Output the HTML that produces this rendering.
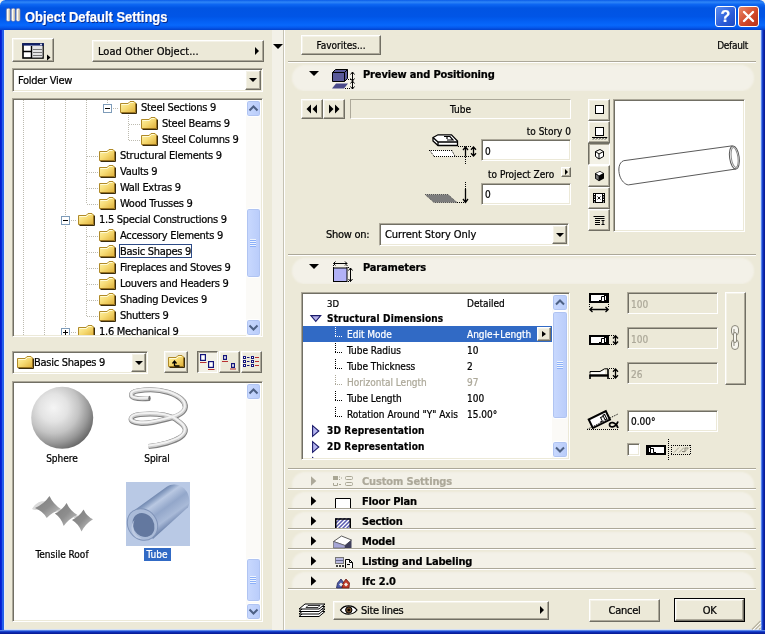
<!DOCTYPE html>
<html><head><meta charset="utf-8"><title>Object Default Settings</title>
<style>
*{box-sizing:border-box;margin:0;padding:0}
html,body{width:765px;height:634px;overflow:hidden;background:#ECE9D8}
body{position:relative;font-family:"DejaVu Sans Condensed","Liberation Sans",sans-serif;font-size:11px;letter-spacing:-0.28px;color:#000;line-height:14px}
.a{position:absolute}
.t{position:absolute;white-space:nowrap;height:14px;line-height:14px;-webkit-text-stroke:0.22px currentColor}
.b{font-weight:bold;letter-spacing:-0.15px}
.s{font-size:10px;letter-spacing:0}
.s.b{letter-spacing:0.15px}
.g{color:#ACA899}
.w{color:#fff}
.btn{position:absolute;background:#ECE9D8;border:1px solid;border-color:#fff #716F64 #716F64 #fff;box-shadow:inset -1px -1px 0 #ACA899,inset 1px 1px 0 #F4F2E8}
.btnp{position:absolute;background:#F3F1E6;border:1px solid;border-color:#716F64 #fff #fff #716F64;box-shadow:inset 1px 1px 0 #ACA899}
.sunk{position:absolute;background:#fff;border:1px solid;border-color:#ACA899 #fff #fff #ACA899;box-shadow:inset 1px 1px 0 #716F64,inset -1px -1px 0 #ECE9D8}
.thin{position:absolute;border:1px solid;border-color:#ACA899 #fff #fff #ACA899}
.hl{position:absolute;height:2px;border-top:1px solid #ACA899;border-bottom:1px solid #fff}
.pill{position:absolute;background:#F3F1E8}
.td{position:absolute;width:0;height:0;border-left:5px solid transparent;border-right:5px solid transparent;border-top:5px solid #000}
.tr{position:absolute;width:0;height:0;border-top:4px solid transparent;border-bottom:4px solid transparent;border-left:4px solid #000}
.sb{position:absolute;background:#FBFAF7}
.sbb{position:absolute;background:linear-gradient(to right,#C9D9FE,#B9CCFA);border:1px solid #fff;border-radius:3px;box-shadow:inset 0 0 0 1px #B0C4F2}
svg{position:absolute;overflow:visible}
.vd{position:absolute;width:1px;background-image:linear-gradient(to bottom,#BDBBB0 50%,transparent 50%);background-size:1px 2px}
.hd{position:absolute;height:1px;background-image:linear-gradient(to right,#BDBBB0 50%,transparent 50%);background-size:2px 1px}
</style></head><body><div id="w" style="position:absolute;left:0;top:0;width:765px;height:634px;overflow:hidden;will-change:transform;opacity:0.999">

<svg width="0" height="0" style="left:0;top:0"><defs>
<linearGradient id="fg" x1="0" y1="0" x2="1" y2="1"><stop offset="0" stop-color="#FFF6B0"/><stop offset="0.5" stop-color="#F6DA72"/><stop offset="1" stop-color="#DDAE38"/></linearGradient>

<radialGradient id="sph" cx="0.36" cy="0.34" r="0.71"><stop offset="0" stop-color="#F5F5F5"/><stop offset="0.32" stop-color="#E3E3E3"/><stop offset="0.58" stop-color="#C4C4C4"/><stop offset="0.8" stop-color="#989898"/><stop offset="1" stop-color="#666666"/></radialGradient>
</defs></svg>
<div class="a" style="left:0;top:0;width:765px;height:30px;background:linear-gradient(to bottom,#0A5BE8 0,#2F86F7 7%,#0D66F2 15%,#0054E3 27%,#0055E6 55%,#0460F4 72%,#0768FC 84%,#0558EC 92%,#0141CC 100%)"></div>
<div class="t" style="left:25px;top:8px;height:18px;color:#fff;font:bold 14px/18px 'Liberation Sans',sans-serif;letter-spacing:0;transform-origin:0 0;transform:scaleX(0.925);text-shadow:1px 1px 0 #0A2A8A">Object Default Settings</div>
<svg style="left:6px;top:8px" width="15" height="14" viewBox="0 0 15 14"><g stroke="#5A6AA8" stroke-width="0.7"><rect x="0.3" y="0.3" width="4" height="13" rx="1.6" fill="#FFFDF2"/><rect x="5.2" y="0.3" width="4" height="13" rx="1.6" fill="#FFFDF2"/><rect x="10.1" y="0.3" width="4" height="13" rx="1.6" fill="#FFFDF2"/></g><path d="M3.2 1.5 V12 M8.1 1.5 V12 M13 1.5 V12" stroke="#B9A98F" stroke-width="1"/></svg>
<div class="a" style="left:715px;top:6px;width:21px;height:21px;border:1px solid #fff;border-radius:3px;background:linear-gradient(135deg,#5B8DF0,#2A5BD8 60%,#1E49C0)"></div>
<div class="t" style="left:715px;top:7px;width:21px;height:19px;line-height:19px;text-align:center;color:#fff;font:bold 16px/19px 'Liberation Sans',sans-serif;letter-spacing:0">?</div>
<div class="a" style="left:738px;top:6px;width:21px;height:21px;border:1px solid #fff;border-radius:3px;background:linear-gradient(135deg,#E9896A,#D2492A 55%,#B8321A)"></div>
<svg style="left:738px;top:6px" width="21" height="21"><path d="M6 6 L15 15 M15 6 L6 15" stroke="#fff" stroke-width="2.4" stroke-linecap="round"/></svg>
<div class="a" style="left:4px;top:30px;width:1px;height:600px;background:#E4ECFA"></div><div class="a" style="left:760px;top:30px;width:1px;height:600px;background:#D4E0F6"></div><div class="a" style="left:4px;top:629px;width:757px;height:1px;background:#D4E0F6"></div>
<svg style="left:0;top:0" width="765" height="6"><path d="M0 0 H5.500 A5.500 5.500 0 0 0 0 5.500Z M765 0 H759.500 A5.500 5.500 0 0 1 765 5.500Z" fill="#F4F4F0"/></svg>
<div class="a" style="left:0;top:30px;width:4px;height:604px;background:linear-gradient(to right,#0019CF 0,#0A2AD8 40%,#2460EA 60%,#2460EA 100%)"></div>
<div class="a" style="left:761px;top:30px;width:4px;height:604px;background:linear-gradient(to right,#9DBCF5 0,#2A5CE0 22%,#1038C4 45%,#0A22A6 70%,#061A90 100%)"></div>
<div class="a" style="left:0;top:630px;width:765px;height:4px;background:linear-gradient(to bottom,#9DBCF5 0,#2A5CE0 22%,#1038C4 45%,#0A22A6 70%,#061A90 100%)"></div>
<div class="btn" style="left:12px;top:38px;width:42px;height:24px"></div>
<svg style="left:22px;top:43px" width="30" height="18"><rect x="1" y="1" width="20" height="14" fill="#fff" stroke="#000" stroke-width="1.6"/><rect x="10" y="3" width="10.5" height="11.5" fill="#E4E4E4"/><rect x="0.2" y="0.2" width="21.6" height="2.4" fill="#10206A"/><rect x="18" y="0.8" width="2" height="1" fill="#fff"/><path d="M9.5 3 V15 M1 8.5 H9.5" stroke="#000" stroke-width="1.4"/><path d="M11 6.5 H20 M11 9.5 H20 M11 12.5 H20" stroke="#777" stroke-width="1"/><path d="M25 11.5 L28.5 14.5 L25 17.5Z" fill="#000"/></svg>
<div class="btn" style="left:92px;top:40px;width:172px;height:22px"></div>
<div class="t " style="left:98px;top:45px;letter-spacing:0.05px">Load Other Object...</div>
<div class="tr" style="left:255px;top:47px"></div>
<div class="sunk" style="left:12px;top:68px;width:251px;height:24px;"></div>
<div class="t " style="left:18px;top:74px;">Folder View</div>
<div class="btn" style="left:245px;top:70px;width:16px;height:20px"></div>
<div class="a" style="left:249px;top:78px;width:0;height:0;border-left:4px solid transparent;border-right:4px solid transparent;border-top:4px solid #000"></div>
<div class="sunk" style="left:12px;top:98px;width:251px;height:239px;"></div>
<div class="a" style="left:14px;top:100px;width:232px;height:235px;overflow:hidden">
<div class="vd" style="left:9px;top:0px;height:236px"></div>
<div class="vd" style="left:30px;top:0px;height:236px"></div>
<div class="vd" style="left:51px;top:0px;height:236px"></div>
<div class="vd" style="left:72px;top:0px;height:104px"></div>
<div class="vd" style="left:72px;top:127px;height:89px"></div>
<div class="vd" style="left:93px;top:0px;height:4px"></div>
<div class="vd" style="left:114px;top:15px;height:25px"></div>
<div class="hd" style="left:99px;top:8px;width:6px"></div>
<div class="a" style="left:89px;top:4px;width:9px;height:9px;border:1px solid #7E9CB9;background:#fff"></div>
<div class="a" style="left:91px;top:8px;width:5px;height:1px;background:#000"></div>
<svg style="left:106px;top:0px" width="17" height="15"><path d="M0.500 3.500 H8 L10 1.500 H14 L15.500 3 V12.500 H0.500 Z" fill="url(#fg)" stroke="#B08A28" stroke-width="1"/><path d="M1.500 4.500 H8.500 L10.500 2.500 H13.500" stroke="#FFFBD6" stroke-width="1" fill="none"/><path d="M16.500 3.500 V13.500 H1.500" stroke="#3A2C0C" stroke-width="1" fill="none"/><path d="M15.500 4 V12.500 H1" stroke="#9A7420" stroke-width="1" fill="none"/></svg>
<div class="t" style="left:127px;top:1px">Steel Sections 9</div>
<div class="hd" style="left:115px;top:24px;width:11px"></div>
<svg style="left:127px;top:16px" width="17" height="15"><path d="M0.500 3.500 H8 L10 1.500 H14 L15.500 3 V12.500 H0.500 Z" fill="url(#fg)" stroke="#B08A28" stroke-width="1"/><path d="M1.500 4.500 H8.500 L10.500 2.500 H13.500" stroke="#FFFBD6" stroke-width="1" fill="none"/><path d="M16.500 3.500 V13.500 H1.500" stroke="#3A2C0C" stroke-width="1" fill="none"/><path d="M15.500 4 V12.500 H1" stroke="#9A7420" stroke-width="1" fill="none"/></svg>
<div class="t" style="left:148px;top:17px">Steel Beams 9</div>
<div class="hd" style="left:115px;top:40px;width:11px"></div>
<svg style="left:127px;top:32px" width="17" height="15"><path d="M0.500 3.500 H8 L10 1.500 H14 L15.500 3 V12.500 H0.500 Z" fill="url(#fg)" stroke="#B08A28" stroke-width="1"/><path d="M1.500 4.500 H8.500 L10.500 2.500 H13.500" stroke="#FFFBD6" stroke-width="1" fill="none"/><path d="M16.500 3.500 V13.500 H1.500" stroke="#3A2C0C" stroke-width="1" fill="none"/><path d="M15.500 4 V12.500 H1" stroke="#9A7420" stroke-width="1" fill="none"/></svg>
<div class="t" style="left:148px;top:33px">Steel Columns 9</div>
<div class="hd" style="left:73px;top:56px;width:11px"></div>
<svg style="left:85px;top:48px" width="17" height="15"><path d="M0.500 3.500 H8 L10 1.500 H14 L15.500 3 V12.500 H0.500 Z" fill="url(#fg)" stroke="#B08A28" stroke-width="1"/><path d="M1.500 4.500 H8.500 L10.500 2.500 H13.500" stroke="#FFFBD6" stroke-width="1" fill="none"/><path d="M16.500 3.500 V13.500 H1.500" stroke="#3A2C0C" stroke-width="1" fill="none"/><path d="M15.500 4 V12.500 H1" stroke="#9A7420" stroke-width="1" fill="none"/></svg>
<div class="t" style="left:106px;top:49px">Structural Elements 9</div>
<div class="hd" style="left:73px;top:72px;width:11px"></div>
<svg style="left:85px;top:64px" width="17" height="15"><path d="M0.500 3.500 H8 L10 1.500 H14 L15.500 3 V12.500 H0.500 Z" fill="url(#fg)" stroke="#B08A28" stroke-width="1"/><path d="M1.500 4.500 H8.500 L10.500 2.500 H13.500" stroke="#FFFBD6" stroke-width="1" fill="none"/><path d="M16.500 3.500 V13.500 H1.500" stroke="#3A2C0C" stroke-width="1" fill="none"/><path d="M15.500 4 V12.500 H1" stroke="#9A7420" stroke-width="1" fill="none"/></svg>
<div class="t" style="left:106px;top:65px">Vaults 9</div>
<div class="hd" style="left:73px;top:88px;width:11px"></div>
<svg style="left:85px;top:80px" width="17" height="15"><path d="M0.500 3.500 H8 L10 1.500 H14 L15.500 3 V12.500 H0.500 Z" fill="url(#fg)" stroke="#B08A28" stroke-width="1"/><path d="M1.500 4.500 H8.500 L10.500 2.500 H13.500" stroke="#FFFBD6" stroke-width="1" fill="none"/><path d="M16.500 3.500 V13.500 H1.500" stroke="#3A2C0C" stroke-width="1" fill="none"/><path d="M15.500 4 V12.500 H1" stroke="#9A7420" stroke-width="1" fill="none"/></svg>
<div class="t" style="left:106px;top:81px">Wall Extras 9</div>
<div class="hd" style="left:73px;top:104px;width:11px"></div>
<svg style="left:85px;top:96px" width="17" height="15"><path d="M0.500 3.500 H8 L10 1.500 H14 L15.500 3 V12.500 H0.500 Z" fill="url(#fg)" stroke="#B08A28" stroke-width="1"/><path d="M1.500 4.500 H8.500 L10.500 2.500 H13.500" stroke="#FFFBD6" stroke-width="1" fill="none"/><path d="M16.500 3.500 V13.500 H1.500" stroke="#3A2C0C" stroke-width="1" fill="none"/><path d="M15.500 4 V12.500 H1" stroke="#9A7420" stroke-width="1" fill="none"/></svg>
<div class="t" style="left:106px;top:97px">Wood Trusses 9</div>
<div class="hd" style="left:57px;top:120px;width:6px"></div>
<div class="a" style="left:47px;top:116px;width:9px;height:9px;border:1px solid #7E9CB9;background:#fff"></div>
<div class="a" style="left:49px;top:120px;width:5px;height:1px;background:#000"></div>
<svg style="left:64px;top:112px" width="17" height="15"><path d="M0.500 3.500 H8 L10 1.500 H14 L15.500 3 V12.500 H0.500 Z" fill="url(#fg)" stroke="#B08A28" stroke-width="1"/><path d="M1.500 4.500 H8.500 L10.500 2.500 H13.500" stroke="#FFFBD6" stroke-width="1" fill="none"/><path d="M16.500 3.500 V13.500 H1.500" stroke="#3A2C0C" stroke-width="1" fill="none"/><path d="M15.500 4 V12.500 H1" stroke="#9A7420" stroke-width="1" fill="none"/></svg>
<div class="t" style="left:85px;top:113px">1.5 Special Constructions 9</div>
<div class="hd" style="left:73px;top:136px;width:11px"></div>
<svg style="left:85px;top:128px" width="17" height="15"><path d="M0.500 3.500 H8 L10 1.500 H14 L15.500 3 V12.500 H0.500 Z" fill="url(#fg)" stroke="#B08A28" stroke-width="1"/><path d="M1.500 4.500 H8.500 L10.500 2.500 H13.500" stroke="#FFFBD6" stroke-width="1" fill="none"/><path d="M16.500 3.500 V13.500 H1.500" stroke="#3A2C0C" stroke-width="1" fill="none"/><path d="M15.500 4 V12.500 H1" stroke="#9A7420" stroke-width="1" fill="none"/></svg>
<div class="t" style="left:106px;top:129px">Accessory Elements 9</div>
<div class="hd" style="left:73px;top:152px;width:11px"></div>
<svg style="left:85px;top:144px" width="17" height="15"><path d="M0.500 3.500 H8 L10 1.500 H14 L15.500 3 V12.500 H0.500 Z" fill="url(#fg)" stroke="#B08A28" stroke-width="1"/><path d="M1.500 4.500 H8.500 L10.500 2.500 H13.500" stroke="#FFFBD6" stroke-width="1" fill="none"/><path d="M16.500 3.500 V13.500 H1.500" stroke="#3A2C0C" stroke-width="1" fill="none"/><path d="M15.500 4 V12.500 H1" stroke="#9A7420" stroke-width="1" fill="none"/></svg>
<div class="a" style="left:105px;top:144px;width:73px;height:14px;border:1px solid #2C4A86"></div>
<div class="t" style="left:106px;top:145px">Basic Shapes 9</div>
<div class="hd" style="left:73px;top:168px;width:11px"></div>
<svg style="left:85px;top:160px" width="17" height="15"><path d="M0.500 3.500 H8 L10 1.500 H14 L15.500 3 V12.500 H0.500 Z" fill="url(#fg)" stroke="#B08A28" stroke-width="1"/><path d="M1.500 4.500 H8.500 L10.500 2.500 H13.500" stroke="#FFFBD6" stroke-width="1" fill="none"/><path d="M16.500 3.500 V13.500 H1.500" stroke="#3A2C0C" stroke-width="1" fill="none"/><path d="M15.500 4 V12.500 H1" stroke="#9A7420" stroke-width="1" fill="none"/></svg>
<div class="t" style="left:106px;top:161px">Fireplaces and Stoves 9</div>
<div class="hd" style="left:73px;top:184px;width:11px"></div>
<svg style="left:85px;top:176px" width="17" height="15"><path d="M0.500 3.500 H8 L10 1.500 H14 L15.500 3 V12.500 H0.500 Z" fill="url(#fg)" stroke="#B08A28" stroke-width="1"/><path d="M1.500 4.500 H8.500 L10.500 2.500 H13.500" stroke="#FFFBD6" stroke-width="1" fill="none"/><path d="M16.500 3.500 V13.500 H1.500" stroke="#3A2C0C" stroke-width="1" fill="none"/><path d="M15.500 4 V12.500 H1" stroke="#9A7420" stroke-width="1" fill="none"/></svg>
<div class="t" style="left:106px;top:177px">Louvers and Headers 9</div>
<div class="hd" style="left:73px;top:200px;width:11px"></div>
<svg style="left:85px;top:192px" width="17" height="15"><path d="M0.500 3.500 H8 L10 1.500 H14 L15.500 3 V12.500 H0.500 Z" fill="url(#fg)" stroke="#B08A28" stroke-width="1"/><path d="M1.500 4.500 H8.500 L10.500 2.500 H13.500" stroke="#FFFBD6" stroke-width="1" fill="none"/><path d="M16.500 3.500 V13.500 H1.500" stroke="#3A2C0C" stroke-width="1" fill="none"/><path d="M15.500 4 V12.500 H1" stroke="#9A7420" stroke-width="1" fill="none"/></svg>
<div class="t" style="left:106px;top:193px">Shading Devices 9</div>
<div class="hd" style="left:73px;top:216px;width:11px"></div>
<svg style="left:85px;top:208px" width="17" height="15"><path d="M0.500 3.500 H8 L10 1.500 H14 L15.500 3 V12.500 H0.500 Z" fill="url(#fg)" stroke="#B08A28" stroke-width="1"/><path d="M1.500 4.500 H8.500 L10.500 2.500 H13.500" stroke="#FFFBD6" stroke-width="1" fill="none"/><path d="M16.500 3.500 V13.500 H1.500" stroke="#3A2C0C" stroke-width="1" fill="none"/><path d="M15.500 4 V12.500 H1" stroke="#9A7420" stroke-width="1" fill="none"/></svg>
<div class="t" style="left:106px;top:209px">Shutters 9</div>
<div class="hd" style="left:57px;top:232px;width:6px"></div>
<div class="a" style="left:47px;top:228px;width:9px;height:9px;border:1px solid #7E9CB9;background:#fff"></div>
<div class="a" style="left:49px;top:232px;width:5px;height:1px;background:#000"></div>
<div class="a" style="left:51px;top:230px;width:1px;height:5px;background:#000"></div>
<svg style="left:64px;top:224px" width="17" height="15"><path d="M0.500 3.500 H8 L10 1.500 H14 L15.500 3 V12.500 H0.500 Z" fill="url(#fg)" stroke="#B08A28" stroke-width="1"/><path d="M1.500 4.500 H8.500 L10.500 2.500 H13.500" stroke="#FFFBD6" stroke-width="1" fill="none"/><path d="M16.500 3.500 V13.500 H1.500" stroke="#3A2C0C" stroke-width="1" fill="none"/><path d="M15.500 4 V12.500 H1" stroke="#9A7420" stroke-width="1" fill="none"/></svg>
<div class="t" style="left:85px;top:225px">1.6 Mechanical 9</div>
</div>
<div class="sb" style="left:246px;top:100px;width:15px;height:236px;"></div>
<div class="sbb" style="left:246px;top:100px;width:15px;height:17px;"></div>
<svg style="left:246px;top:100px" width="15" height="17"><path d="M3.5 10.500 L7.5 6.500 L11.5 10.500" fill="none" stroke="#4D6185" stroke-width="2"/></svg>
<div class="sbb" style="left:246px;top:319px;width:15px;height:17px;"></div>
<svg style="left:246px;top:319px" width="15" height="17"><path d="M3.5 6.500 L7.5 10.500 L11.5 6.500" fill="none" stroke="#4D6185" stroke-width="2"/></svg>
<div class="sbb" style="left:246px;top:208px;width:15px;height:70px;"></div>
<div class="a" style="left:250px;top:239px;width:6px;height:1px;background:#EEF4FE;box-shadow:0 1px 0 #8CB0F8"></div>
<div class="a" style="left:250px;top:241px;width:6px;height:1px;background:#EEF4FE;box-shadow:0 1px 0 #8CB0F8"></div>
<div class="a" style="left:250px;top:243px;width:6px;height:1px;background:#EEF4FE;box-shadow:0 1px 0 #8CB0F8"></div>
<div class="a" style="left:250px;top:245px;width:6px;height:1px;background:#EEF4FE;box-shadow:0 1px 0 #8CB0F8"></div>
<div class="sunk" style="left:12px;top:351px;width:136px;height:23px;"></div>
<svg style="left:17px;top:355px" width="17" height="15"><path d="M0.500 3.500 H8 L10 1.500 H14 L15.500 3 V12.500 H0.500 Z" fill="url(#fg)" stroke="#B08A28" stroke-width="1"/><path d="M1.500 4.500 H8.500 L10.500 2.500 H13.500" stroke="#FFFBD6" stroke-width="1" fill="none"/><path d="M16.500 3.500 V13.500 H1.500" stroke="#3A2C0C" stroke-width="1" fill="none"/><path d="M15.500 4 V12.500 H1" stroke="#9A7420" stroke-width="1" fill="none"/></svg>
<div class="t " style="left:34px;top:356px;">Basic Shapes 9</div>
<div class="btn" style="left:131px;top:353px;width:15px;height:19px"></div>
<div class="a" style="left:135px;top:361px;width:0;height:0;border-left:4px solid transparent;border-right:4px solid transparent;border-top:4px solid #000"></div>
<div class="btn" style="left:164px;top:351px;width:24px;height:22px"></div>
<svg style="left:168px;top:354px" width="17" height="15"><path d="M0.500 3.500 H8 L10 1.500 H14 L15.500 3 V12.500 H0.500 Z" fill="url(#fg)" stroke="#B08A28" stroke-width="1"/><path d="M1.500 4.500 H8.500 L10.500 2.500 H13.500" stroke="#FFFBD6" stroke-width="1" fill="none"/><path d="M16.500 3.500 V13.500 H1.500" stroke="#3A2C0C" stroke-width="1" fill="none"/><path d="M15.500 4 V12.500 H1" stroke="#9A7420" stroke-width="1" fill="none"/><path d="M6.5 12 H11.5 M6.5 12 V7.5 M4.5 9.5 L6.5 7 L8.5 9.5" stroke="#000" stroke-width="1.3" fill="none"/></svg>
<div class="btnp" style="left:197px;top:351px;width:21px;height:22px"></div>
<div class="btn" style="left:219px;top:351px;width:21px;height:22px"></div>
<div class="btn" style="left:241px;top:351px;width:21px;height:22px"></div>
<svg style="left:197px;top:351px" width="66" height="22"><g fill="#fff" stroke="#14147A" stroke-width="1.2"><rect x="3.600" y="3.600" width="4.800" height="5.800"/><rect x="11.600" y="10.600" width="4.800" height="5.800"/></g><path d="M3 11.500 H9.500 M11 18.500 H17.500" stroke="#B83030" stroke-width="1.200"/><g fill="#fff" stroke="#14147A" stroke-width="1.200"><rect x="26.600" y="4.600" width="2.800" height="3.800"/><rect x="34.600" y="12.600" width="2.800" height="3.800"/></g><path d="M25 10.500 H31 M33 18 H39" stroke="#B83030" stroke-width="1.200"/><g fill="#fff" stroke="#14147A" stroke-width="1"><rect x="46.5" y="5.5" width="2" height="2"/><rect x="54.5" y="5.5" width="2" height="2"/><rect x="46.5" y="9.5" width="2" height="2"/><rect x="54.5" y="9.5" width="2" height="2"/><rect x="46.5" y="13.5" width="2" height="2"/><rect x="54.5" y="13.5" width="2" height="2"/></g><path d="M50 6.500 H52.500 M50 10.500 H52.500 M50 14.500 H52.500" stroke="#14147A" stroke-width="1"/><path d="M58 6.500 H62 M58 10.500 H62 M58 14.500 H62" stroke="#B83030" stroke-width="1"/></svg>
<div class="sunk" style="left:12px;top:381px;width:251px;height:241px;"></div>
<div class="sb" style="left:246px;top:383px;width:15px;height:237px;"></div>
<div class="sbb" style="left:246px;top:383px;width:15px;height:17px;"></div>
<svg style="left:246px;top:383px" width="15" height="17"><path d="M3.5 10.500 L7.5 6.500 L11.5 10.500" fill="none" stroke="#4D6185" stroke-width="2"/></svg>
<div class="sbb" style="left:246px;top:603px;width:15px;height:17px;"></div>
<svg style="left:246px;top:603px" width="15" height="17"><path d="M3.5 6.500 L7.5 10.500 L11.5 6.500" fill="none" stroke="#4D6185" stroke-width="2"/></svg>
<div class="sbb" style="left:246px;top:558px;width:15px;height:44px;"></div>
<div class="a" style="left:250px;top:576px;width:6px;height:1px;background:#EEF4FE;box-shadow:0 1px 0 #8CB0F8"></div>
<div class="a" style="left:250px;top:578px;width:6px;height:1px;background:#EEF4FE;box-shadow:0 1px 0 #8CB0F8"></div>
<div class="a" style="left:250px;top:580px;width:6px;height:1px;background:#EEF4FE;box-shadow:0 1px 0 #8CB0F8"></div>
<div class="a" style="left:250px;top:582px;width:6px;height:1px;background:#EEF4FE;box-shadow:0 1px 0 #8CB0F8"></div>
<svg style="left:31px;top:387px" width="62" height="62"><circle cx="31.2" cy="30.8" r="31" fill="url(#sph)"/></svg>
<div class="t s" style="left:22px;width:80px;text-align:center;top:452px;">Sphere</div>
<div class="t s" style="left:117px;width:80px;text-align:center;top:452px;">Spiral</div>
<div class="t s" style="left:22px;width:80px;text-align:center;top:548px;">Tensile Roof</div>
<div class="a" style="left:126px;top:482px;width:64px;height:64px;background:#B9C9E5"></div>
<div class="a" style="left:144px;top:548px;width:27px;height:13px;background:#316AC5"></div>
<div class="t w s" style="left:117px;width:80px;text-align:center;top:548px;">Tube</div>
<svg style="left:127px;top:384px" width="64" height="66" viewBox="0 0 64 66"><g transform="translate(2.2,2.9) scale(0.94)"><g fill="none" stroke-linecap="butt"><path d="M21.4 12.3 C12 13 4 12.5 2.9 10.2 C1.5 7 4 5 10 4.2 C20 2.5 32.7 3 42 6 C54 10 60 16 59.7 21.6 C59 28 50 32 39.8 34.4 C30 37 18 39.5 11.4 38.6 C4 38 1.5 36 2.2 33.6 C3 31 7 30 11.4 29.4 C20 28.5 30 28.8 37 30 C44 31.5 48 33 51.2 35.8 C56 39 59.5 42 59.7 45.7 C60 52 50 57 39.8 59.9 C32 62 26 63 20.6 63.5" stroke="#808080" stroke-width="5.4"/><path d="M21.4 12.3 C12 13 4 12.5 2.9 10.2 C1.5 7 4 5 10 4.2 C20 2.5 32.7 3 42 6 C54 10 60 16 59.7 21.6 C59 28 50 32 39.8 34.4 C30 37 18 39.5 11.4 38.6 C4 38 1.5 36 2.2 33.6 C3 31 7 30 11.4 29.4 C20 28.5 30 28.8 37 30 C44 31.5 48 33 51.2 35.8 C56 39 59.5 42 59.7 45.7 C60 52 50 57 39.8 59.9 C32 62 26 63 20.6 63.5" stroke="#CFCFCF" stroke-width="4" transform="translate(-0.3,-0.5)"/><path d="M21.4 12.3 C12 13 4 12.5 2.9 10.2 C1.5 7 4 5 10 4.2 C20 2.5 32.7 3 42 6 C54 10 60 16 59.7 21.6 C59 28 50 32 39.8 34.4 C30 37 18 39.5 11.4 38.6 C4 38 1.5 36 2.2 33.6 C3 31 7 30 11.4 29.4 C20 28.5 30 28.8 37 30 C44 31.5 48 33 51.2 35.8 C56 39 59.5 42 59.7 45.7 C60 52 50 57 39.8 59.9 C32 62 26 63 20.6 63.5" stroke="#F2F2F2" stroke-width="2" transform="translate(-0.5,-1)"/></g><ellipse cx="21.6" cy="12.2" rx="1.2" ry="2.7" fill="#6E6E6E"/></g></svg>
<svg style="left:30px;top:494px" width="64" height="40" viewBox="0 0 64 40"><defs><linearGradient id="tr1" x1="0" y1="0" x2="1" y2="1"><stop offset="0" stop-color="#7E7E7E"/><stop offset="0.5" stop-color="#8E8E8E"/><stop offset="1" stop-color="#CDCDCD"/></linearGradient></defs><path d="M2 15 C6 8 12 6 17 8 L12 16 C8 15 5 17 2 15Z" fill="#DADADA"/><path d="M19.5 2 Q23.2 10.3 31.5 15.4 Q22.2 17.8 16.7 24 Q13.2 17.4 5 14 Q14.1 9.9 19.5 2Z" fill="url(#tr1)"/><path d="M26 17 C30 14 34 15 38 14 L34 20Z" fill="#D0D0D0"/><path d="M36.6 9 Q40.0 16.7 47.5 21 Q39.0 24.5 33.7 32 Q31.3 24.1 24.9 19.6 Q32.3 16.3 36.6 9Z" fill="url(#tr1)"/><path d="M43 23 C47 21 50 22 54 21 L50 27Z" fill="#CCCCCC"/><path d="M53.6 15.5 Q56.5 22.2 63 25.3 Q55.7 29.7 51.5 37.5 Q48.6 29.9 42 26 Q49.3 22.5 53.6 15.5Z" fill="url(#tr1)"/></svg>
<svg style="left:126px;top:482px" width="64" height="64" viewBox="0 0 64 64"><defs><linearGradient id="tbg" gradientUnits="userSpaceOnUse" x1="22" y1="18" x2="41.3" y2="44.7"><stop offset="0" stop-color="#6F86AE"/><stop offset="0.1" stop-color="#8EA3C6"/><stop offset="0.22" stop-color="#B9C8E2"/><stop offset="0.5" stop-color="#93A7CA"/><stop offset="0.8" stop-color="#A9BAD8"/><stop offset="0.95" stop-color="#8397BC"/><stop offset="1" stop-color="#7389B0"/></linearGradient></defs>
<path d="M4.500 31 L40.800 4.700 C48 0 58 3 62 12 C64 18 63.500 22 62 25.300 L27 57 Z" fill="url(#tbg)"/>
<ellipse cx="16.500" cy="42.500" rx="14.500" ry="16.500" transform="rotate(-36 16.500 42.500)" fill="#AABBD8" stroke="#7F93B8" stroke-width="1"/>
<ellipse cx="17.500" cy="43" rx="10.500" ry="12.500" transform="rotate(-30 17.500 43)" fill="#63789F"/>
<path d="M8.500 38 C5 46 9 54 16 56.500 C8 58 1.500 47 8.500 38Z" fill="#BECBE3"/></svg>
<div class="a" style="left:272px;top:30px;width:11px;height:600px;background:#F3F1E8"></div>
<div class="a" style="left:283px;top:30px;width:1px;height:600px;background:#C5C2B2"></div>
<div class="a" style="left:284px;top:30px;width:1px;height:600px;background:#fff"></div>
<div class="td" style="left:273px;top:44px"></div>
<div class="btn" style="left:301px;top:35px;width:80px;height:20px"></div>
<div class="t s" style="left:301px;width:80px;text-align:center;top:39px;">Favorites...</div>
<div class="t s" style="right:17px;top:39px;letter-spacing:-0.3px">Default</div>
<div class="hl" style="left:288px;top:61px;width:468px"></div>
<div class="a" style="left:290px;top:64px;width:466px;height:27px;overflow:hidden"><div class="pill" style="left:4px;top:3px;width:458px;height:22px;border-radius:11px;box-shadow:0 0 2px 2px #F3F1E8"></div></div>
<div class="td" style="left:309px;top:71px"></div>
<div class="t b " style="left:363px;top:68px;">Preview and Positioning</div>
<svg style="left:332px;top:69px" width="24" height="21"><path d="M0.5 3.5 L3.5 0.5 H15.5 V9.5 L12.5 12.5 H0.5Z" fill="#5A5A9A" stroke="#000" stroke-width="1"/><path d="M0.5 3.5 H12.5 V12.5 M12.5 3.5 L15.5 0.5" fill="none" stroke="#000"/><path d="M4 14.5 H16 L12 19.5 H0Z" fill="#4A4A8A"/><path d="M16 10.5 H19 M13 19.5 H19" stroke="#000" stroke-dasharray="1 1"/><path d="M20.5 3 V20 M18.5 5.5 L20.5 3 L22.5 5.5 M18.5 9.5 L20.5 12 L22.5 9.5 M18.5 14.5 L20.5 12 M22.5 14.5 L20.5 12 M18.5 17.5 L20.5 20 L22.5 17.5" stroke="#000" fill="none"/></svg>
<div class="btn" style="left:301px;top:99px;width:22px;height:20px"></div>
<div class="btn" style="left:323px;top:99px;width:22px;height:20px"></div>
<svg style="left:301px;top:99px" width="44" height="20"><path d="M10 5.5 V14.5 L5.5 10Z M16 5.5 V14.5 L11.5 10Z M28 5.5 V14.5 L32.5 10Z M34 5.5 V14.5 L38.5 10Z" fill="#000"/></svg>
<div class="thin" style="left:350px;top:99px;width:221px;height:20px;"></div>
<div class="t s" style="left:350px;width:221px;text-align:center;top:103px;">Tube</div>
<div class="t s" style="right:194px;top:125px;">to Story 0</div>
<div class="sunk" style="left:481px;top:139px;width:90px;height:22px;"></div>
<div class="t s" style="left:485px;top:145px;">0</div>
<div class="t s" style="left:488px;top:168px;">to Project Zero</div>
<div class="btn" style="left:561px;top:167px;width:10px;height:10px"></div>
<div class="a" style="left:565px;top:169px;width:0;height:0;border-top:3px solid transparent;border-bottom:3px solid transparent;border-left:3px solid #000"></div>
<div class="sunk" style="left:481px;top:183px;width:90px;height:22px;"></div>
<div class="t s" style="left:485px;top:188px;">0</div>
<div class="t " style="left:326px;top:228px;">Show on:</div>
<div class="sunk" style="left:379px;top:223px;width:190px;height:23px;"></div>
<div class="t " style="left:385px;top:228px;letter-spacing:-0.05px">Current Story Only</div>
<div class="btn" style="left:552px;top:225px;width:15px;height:19px"></div>
<div class="a" style="left:556px;top:233px;width:0;height:0;border-left:4px solid transparent;border-right:4px solid transparent;border-top:4px solid #000"></div>
<svg style="left:428px;top:134px" width="52" height="32"><path d="M5 3.500 L10 0.800 H23.500 L29.500 7 V11.500 H10 L5 7Z" fill="#fff" stroke="#000" stroke-width="1.300"/><path d="M5 3.500 L10 8 H29.500 M10 8 V11.500" fill="none" stroke="#000" stroke-width="1.300"/><path d="M16 2.500 H22 L25 6 H19 M19 2.500 V5" fill="none" stroke="#000" stroke-width="1.200"/><path d="M1.500 16.500 H23.500 L27.500 22.500 H6.500Z" fill="#fff"/><path d="M1 16.500 H24 M6 22.500 H28 M1.500 16 L6.500 23 M23.500 16 L27.500 23" fill="none" stroke="#000" stroke-dasharray="1 1"/><path d="M30 12.500 H43 M28 22.500 H43" stroke="#000" stroke-dasharray="1 1"/><path d="M37.500 13 V30" stroke="#000" stroke-dasharray="1 1"/><path d="M37.500 13 V22.500 M35 16 L37.500 13 L40 16" stroke="#000" stroke-width="1.300" fill="none"/><path d="M45.500 13 V22 M43 15.700 L45.500 13 L48 15.700 M43 19.300 L45.500 22 L48 19.300" stroke="#000" stroke-width="1.300" fill="none"/></svg>
<svg style="left:424px;top:180px" width="46" height="26"><path d="M1 14.500 H24 L33 22.500 H10Z" fill="#7C7C7C" stroke="#555" stroke-dasharray="1 1"/><path d="M33 22.500 H41" stroke="#000" stroke-dasharray="1 1"/><path d="M41.500 2 V9" stroke="#000" stroke-dasharray="1 1"/><path d="M41.500 9 V22 M39 19 L41.500 22.500 L44 19" stroke="#000" stroke-width="1.300" fill="none"/></svg>
<div class="btn" style="left:588px;top:99px;width:22px;height:22px"></div>
<div class="btn" style="left:588px;top:121px;width:22px;height:22px"></div>
<div class="btnp" style="left:588px;top:143px;width:22px;height:22px"></div>
<div class="btn" style="left:588px;top:165px;width:22px;height:22px"></div>
<div class="btn" style="left:588px;top:187px;width:22px;height:22px"></div>
<div class="btn" style="left:588px;top:209px;width:22px;height:22px"></div>
<svg style="left:588px;top:99px" width="22" height="132"><rect x="7.500" y="6.500" width="8" height="8" fill="#fff" stroke="#000"/>
<rect x="7.500" y="28.500" width="8" height="8" fill="#fff" stroke="#000"/><path d="M4 38.500 H19" stroke="#000"/><path d="M5 40.500 l2 -2 M8 40.500 l2 -2 M11 40.500 l2 -2 M14 40.500 l2 -2 M17 40.500 l2 -2" stroke="#000" stroke-width="0.900"/>
<path d="M7.500 52.500 L12 50.500 L15.500 52.500 V57.500 L11 60 L7.500 57.500Z M7.500 52.500 L11 55 L15.500 52.500 M11 55 V60" fill="#fff" stroke="#000" stroke-width="1"/>
<path d="M7 74.200 L12 72 L16 74.200 V79.500 L11 82.200 L7 79.500Z" fill="#000"/><path d="M8 74.300 L12 72.800 L15 74.300 L11 76.500Z" fill="#fff"/><path d="M7.800 75.300 L10.600 77.200 V81 L7.800 79.200Z" fill="#777"/>
<rect x="5.500" y="94.500" width="11" height="9" fill="#fff" stroke="#000"/><rect x="5" y="94" width="3" height="10" fill="#000"/><rect x="14" y="94" width="3" height="10" fill="#000"/><path d="M6.500 95 V104 M15.500 95 V104" stroke="#fff" stroke-width="1" stroke-dasharray="1 1.500"/><path d="M9.500 97.500 L12.500 100.500 M12.500 97.500 L9.500 100.500" stroke="#000" stroke-width="0.900"/>
<path d="M5.500 117.500 H16.500 M7 119.500 H16.500 M7 121.500 H12 M7 123.500 H12 M7 125.500 H12 M13.500 121.500 H16.500 M13.500 125.500 H16.500 M15 121.500 V125.500" stroke="#000"/></svg>
<div class="sunk" style="left:613px;top:99px;width:132px;height:133px;"></div>
<svg style="left:613px;top:99px" width="132" height="133"><g fill="none" stroke="#5A5A5A" stroke-width="1"><path d="M10.700 61.700 L119.500 46.800 M15.300 85.900 L123 70"/><ellipse cx="121.400" cy="58.500" rx="4.800" ry="11.700" transform="rotate(-8 121.400 58.500)"/><ellipse cx="121.600" cy="58.500" rx="3.300" ry="10" transform="rotate(-8 121.600 58.500)" stroke="#8A8A8A"/><path d="M10.700 61.700 C5.500 63.500 5 71 6.800 77 C8.500 82 12 85.500 15.300 85.900"/></g></svg>
<div class="hl" style="left:288px;top:254px;width:468px"></div>
<div class="a" style="left:290px;top:257px;width:466px;height:27px;overflow:hidden"><div class="pill" style="left:4px;top:3px;width:458px;height:22px;border-radius:11px;box-shadow:0 0 2px 2px #F3F1E8"></div></div>
<div class="td" style="left:309px;top:264px"></div>
<div class="t b " style="left:363px;top:261px;">Parameters</div>
<svg style="left:332px;top:260px" width="22" height="23"><rect x="1.500" y="8" width="13.500" height="13.500" fill="#B2B2F6" stroke="#000"/><path d="M1.500 3.500 H15 M3.500 1.500 L1.500 3.500 L3.500 5.500 M13 1.500 L15 3.500 L13 5.500 M18.500 8 V21.500 M16.500 10.500 L18.500 8 L20.500 10.500 M16.500 19 L18.500 21.500 L20.500 19" stroke="#000" fill="none"/><path d="M1.500 5 V8 M15 5 V8 M16 7.500 H18 M16 21.500 H18" stroke="#000" stroke-dasharray="1 1"/></svg>
<div class="sunk" style="left:301px;top:292px;width:269px;height:168px;"></div>
<div class="a" style="left:303px;top:295px;width:249px;height:163px;overflow:hidden">
<div class="a" style="left:0px;top:31px;width:250px;height:16px;background:#316AC5"></div>
<div class="t s " style="left:24px;top:2px"><span style="font-size:9.5px">3D</span></div>
<div class="t s " style="left:164px;top:2px">Detailed</div>
<div class="t s b" style="left:24px;top:17px">Structural Dimensions</div>
<svg style="left:7px;top:20px" width="12" height="8"><path d="M0.900 0.600 H10.700 L5.800 6.300Z" fill="#B4B0EA" stroke="#1A1A6A" stroke-width="1.100"/></svg>
<div class="t s w" style="left:44px;top:33px">Edit Mode</div>
<div class="a" style="left:32px;top:32px;width:1px;height:9px;background-image:linear-gradient(to bottom,#fff 50%,transparent 50%);background-size:1px 2px"></div>
<div class="a" style="left:32px;top:41px;width:8px;height:1px;background-image:linear-gradient(to right,#fff 50%,transparent 50%);background-size:2px 1px"></div>
<div class="t s w" style="left:164px;top:33px">Angle+Length</div>
<div class="t s " style="left:44px;top:49px">Tube Radius</div>
<div class="a" style="left:32px;top:48px;width:1px;height:9px;background-image:linear-gradient(to bottom,#000 50%,transparent 50%);background-size:1px 2px"></div>
<div class="a" style="left:32px;top:57px;width:8px;height:1px;background-image:linear-gradient(to right,#000 50%,transparent 50%);background-size:2px 1px"></div>
<div class="t s " style="left:164px;top:49px">10</div>
<div class="t s " style="left:44px;top:65px">Tube Thickness</div>
<div class="a" style="left:32px;top:64px;width:1px;height:9px;background-image:linear-gradient(to bottom,#000 50%,transparent 50%);background-size:1px 2px"></div>
<div class="a" style="left:32px;top:73px;width:8px;height:1px;background-image:linear-gradient(to right,#000 50%,transparent 50%);background-size:2px 1px"></div>
<div class="t s " style="left:164px;top:65px">2</div>
<div class="t s g" style="left:44px;top:81px">Horizontal Length</div>
<div class="a" style="left:32px;top:80px;width:1px;height:9px;background-image:linear-gradient(to bottom,#ACA899 50%,transparent 50%);background-size:1px 2px"></div>
<div class="a" style="left:32px;top:89px;width:8px;height:1px;background-image:linear-gradient(to right,#ACA899 50%,transparent 50%);background-size:2px 1px"></div>
<div class="t s g" style="left:164px;top:81px">97</div>
<div class="t s " style="left:44px;top:97px">Tube Length</div>
<div class="a" style="left:32px;top:96px;width:1px;height:9px;background-image:linear-gradient(to bottom,#000 50%,transparent 50%);background-size:1px 2px"></div>
<div class="a" style="left:32px;top:105px;width:8px;height:1px;background-image:linear-gradient(to right,#000 50%,transparent 50%);background-size:2px 1px"></div>
<div class="t s " style="left:164px;top:97px">100</div>
<div class="t s " style="left:44px;top:113px">Rotation Around "Y" Axis</div>
<div class="a" style="left:32px;top:112px;width:1px;height:9px;background-image:linear-gradient(to bottom,#000 50%,transparent 50%);background-size:1px 2px"></div>
<div class="a" style="left:32px;top:121px;width:8px;height:1px;background-image:linear-gradient(to right,#000 50%,transparent 50%);background-size:2px 1px"></div>
<div class="t s " style="left:164px;top:113px">15.00°</div>
<div class="t s b" style="left:24px;top:129px">3D Representation</div>
<svg style="left:9px;top:130px" width="8" height="12"><path d="M0.600 0.700 V11.300 L6.800 6Z" fill="#B4B4F0" stroke="#1A1A6A" stroke-width="1.100"/></svg>
<div class="t s b" style="left:24px;top:145px">2D Representation</div>
<svg style="left:9px;top:146px" width="8" height="12"><path d="M0.600 0.700 V11.300 L6.800 6Z" fill="#B4B4F0" stroke="#1A1A6A" stroke-width="1.100"/></svg>
<div class="t s b" style="left:24px;top:161px"></div>
<svg style="left:9px;top:162px" width="8" height="12"><path d="M0.600 0.700 V11.300 L6.800 6Z" fill="#B4B4F0" stroke="#1A1A6A" stroke-width="1.100"/></svg>
<div class="btn" style="left:234px;top:32px;width:14px;height:14px"></div>
<div class="a" style="left:239px;top:36px;width:0;height:0;border-top:3px solid transparent;border-bottom:3px solid transparent;border-left:4px solid #000"></div>
</div>
<div class="sb" style="left:552px;top:294px;width:16px;height:164px;"></div>
<div class="sbb" style="left:552px;top:294px;width:16px;height:17px;"></div>
<svg style="left:552px;top:294px" width="16" height="17"><path d="M4.0 10.500 L8.0 6.500 L12.0 10.500" fill="none" stroke="#4D6185" stroke-width="2"/></svg>
<div class="sbb" style="left:552px;top:441px;width:16px;height:17px;"></div>
<svg style="left:552px;top:441px" width="16" height="17"><path d="M4.0 6.500 L8.0 10.500 L12.0 6.500" fill="none" stroke="#4D6185" stroke-width="2"/></svg>
<div class="sbb" style="left:552px;top:311px;width:16px;height:108px;"></div>
<div class="a" style="left:557px;top:361px;width:6px;height:1px;background:#EEF4FE;box-shadow:0 1px 0 #8CB0F8"></div>
<div class="a" style="left:557px;top:363px;width:6px;height:1px;background:#EEF4FE;box-shadow:0 1px 0 #8CB0F8"></div>
<div class="a" style="left:557px;top:365px;width:6px;height:1px;background:#EEF4FE;box-shadow:0 1px 0 #8CB0F8"></div>
<div class="a" style="left:557px;top:367px;width:6px;height:1px;background:#EEF4FE;box-shadow:0 1px 0 #8CB0F8"></div>
<svg style="left:589px;top:293px" width="22" height="20"><rect x="1" y="1" width="18" height="8" fill="#fff" stroke="#000" stroke-width="2"/><path d="M10 7.500 H12.500 V3.500 H15" fill="none" stroke="#000"/><rect x="15.500" y="2.500" width="2" height="5" fill="#fff" stroke="#000"/><path d="M0.500 11 V14 M19.500 11 V14" stroke="#000" stroke-dasharray="1 1"/><path d="M1 16.500 H19 M3.500 14 L0.800 16.500 L3.500 19 M16.500 14 L19.200 16.500 L16.500 19" stroke="#000" stroke-width="1.300" fill="none"/></svg>
<svg style="left:589px;top:335px" width="32" height="12"><rect x="1" y="1" width="18" height="8" fill="#fff" stroke="#000" stroke-width="2"/><path d="M10 7.500 H12.500 V3.500 H15" fill="none" stroke="#000"/><rect x="15.500" y="2.500" width="2" height="5" fill="#fff" stroke="#000"/><path d="M20 0.500 H25 M20 9.500 H25" stroke="#000" stroke-dasharray="1 1"/><path d="M26.500 0.800 V9.200 M24 3.500 L26.500 0.800 L29 3.500 M24 6.500 L26.500 9.200 L29 6.500" stroke="#000" stroke-width="1.300" fill="none"/></svg>
<svg style="left:589px;top:368px" width="32" height="12"><path d="M1 11 V6.500 M19 11 V1" stroke="#000" stroke-width="1.600" fill="none"/><path d="M0.500 7.500 H19.500" stroke="#000" stroke-width="2.400"/><path d="M1 5.500 V3.500 H11 L15.500 0.800 H19" fill="none" stroke="#000" stroke-width="1"/><path d="M2 4.500 H11 L16 2 V6 H2Z" fill="#fff"/><path d="M20 0.500 H25 M20 10.500 H25" stroke="#000" stroke-dasharray="1 1"/><path d="M26.500 1 V10 M24 3.700 L26.500 1 L29 3.700 M24 7.300 L26.500 10 L29 7.300" stroke="#000" stroke-width="1.300" fill="none"/></svg>
<svg style="left:586px;top:408px" width="34" height="24"><g transform="rotate(-26 13 12)"><rect x="4" y="7" width="19" height="9.500" fill="#fff" stroke="#000" stroke-width="2"/><path d="M13 14.500 H15.500 V10.500 H18" fill="none" stroke="#000"/><rect x="18.500" y="9.500" width="2" height="5" fill="#fff" stroke="#000"/></g><path d="M1 21.500 H32" stroke="#000" stroke-dasharray="1 1"/><path d="M1 21.500 L32 6" stroke="#000" stroke-dasharray="1 1"/><path d="M32 13.500 C29.500 20 23.500 20 23.500 16.800 C23.500 13.500 29.500 13.500 32 20" fill="none" stroke="#000" stroke-width="1.800"/></svg>
<div class="sunk" style="left:627px;top:292px;width:91px;height:22px;background:#ECE9D8"></div>
<div class="t g s" style="left:631px;top:298px;">100</div>
<div class="sunk" style="left:627px;top:327px;width:91px;height:22px;background:#ECE9D8"></div>
<div class="t g s" style="left:631px;top:333px;">100</div>
<div class="sunk" style="left:627px;top:362px;width:91px;height:22px;background:#ECE9D8"></div>
<div class="t g s" style="left:631px;top:368px;">26</div>
<div class="sunk" style="left:627px;top:410px;width:91px;height:22px;"></div>
<div class="t s" style="left:631px;top:415px;">0.00°</div>
<div class="btn" style="left:725px;top:292px;width:21px;height:93px"></div>
<svg style="left:730px;top:324px" width="10" height="28"><g fill="#F6F5EE" stroke="#8A877A" stroke-width="1"><rect x="1.500" y="1.500" width="7" height="10" rx="3.500"/><rect x="1.500" y="15.500" width="7" height="10" rx="3.500"/><rect x="3.500" y="8.500" width="3" height="10" rx="1.500"/></g><path d="M4 5 V9 M4 18 V22" stroke="#8A877A"/></svg>
<div class="sunk" style="left:627px;top:443px;width:13px;height:13px;"></div>
<svg style="left:646px;top:439px" width="48" height="22"><rect x="1" y="7" width="18" height="8" fill="#fff" stroke="#000" stroke-width="2"/><rect x="2.500" y="8.500" width="2" height="5" fill="#fff" stroke="#000"/><path d="M5 9.500 H7.500 V13.500 H10" fill="none" stroke="#000"/><path d="M22.500 0 V22" stroke="#000" stroke-dasharray="1 1"/><path d="M25 6.500 H45 M25 15.500 H45 M25.500 6 V16 M44.500 6 V16" fill="none" stroke="#000" stroke-dasharray="1 1"/><path d="M28 13.500 L33 8.500 M33 13.500 L38 8.500 M38 13.500 L43 8.500" stroke="#A8A594" stroke-width="1"/><path d="M36 12.500 H39 V9 H42" fill="none" stroke="#8A877A"/></svg>
<div class="hl" style="left:288px;top:468px;width:468px"></div>
<div class="a" style="left:290px;top:471px;width:466px;height:17px;overflow:hidden"><div class="pill" style="left:4px;top:3px;width:458px;height:22px;border-radius:11px;box-shadow:0 0 2px 2px #F3F1E8"></div></div>
<svg style="left:311px;top:476px" width="6" height="10"><path d="M0 0.300 V9.700 L5.300 5Z" fill="#ACA899"/></svg>
<div class="t b g" style="left:362px;top:475px;">Custom Settings</div>
<div class="hl" style="left:288px;top:488px;width:468px"></div>
<div class="a" style="left:290px;top:491px;width:466px;height:17px;overflow:hidden"><div class="pill" style="left:4px;top:3px;width:458px;height:22px;border-radius:11px;box-shadow:0 0 2px 2px #F3F1E8"></div></div>
<svg style="left:311px;top:496px" width="6" height="10"><path d="M0 0.300 V9.700 L5.300 5Z" fill="#000"/></svg>
<div class="t b " style="left:362px;top:495px;">Floor Plan</div>
<div class="hl" style="left:288px;top:508px;width:468px"></div>
<div class="a" style="left:290px;top:511px;width:466px;height:17px;overflow:hidden"><div class="pill" style="left:4px;top:3px;width:458px;height:22px;border-radius:11px;box-shadow:0 0 2px 2px #F3F1E8"></div></div>
<svg style="left:311px;top:516px" width="6" height="10"><path d="M0 0.300 V9.700 L5.300 5Z" fill="#000"/></svg>
<div class="t b " style="left:362px;top:515px;">Section</div>
<div class="hl" style="left:288px;top:528px;width:468px"></div>
<div class="a" style="left:290px;top:531px;width:466px;height:17px;overflow:hidden"><div class="pill" style="left:4px;top:3px;width:458px;height:22px;border-radius:11px;box-shadow:0 0 2px 2px #F3F1E8"></div></div>
<svg style="left:311px;top:536px" width="6" height="10"><path d="M0 0.300 V9.700 L5.300 5Z" fill="#000"/></svg>
<div class="t b " style="left:362px;top:535px;">Model</div>
<div class="hl" style="left:288px;top:548px;width:468px"></div>
<div class="a" style="left:290px;top:551px;width:466px;height:17px;overflow:hidden"><div class="pill" style="left:4px;top:3px;width:458px;height:22px;border-radius:11px;box-shadow:0 0 2px 2px #F3F1E8"></div></div>
<svg style="left:311px;top:556px" width="6" height="10"><path d="M0 0.300 V9.700 L5.300 5Z" fill="#000"/></svg>
<div class="t b " style="left:362px;top:555px;">Listing and Labeling</div>
<div class="hl" style="left:288px;top:568px;width:468px"></div>
<div class="a" style="left:290px;top:571px;width:466px;height:17px;overflow:hidden"><div class="pill" style="left:4px;top:3px;width:458px;height:22px;border-radius:11px;box-shadow:0 0 2px 2px #F3F1E8"></div></div>
<svg style="left:311px;top:576px" width="6" height="10"><path d="M0 0.300 V9.700 L5.300 5Z" fill="#000"/></svg>
<div class="t b " style="left:362px;top:575px;">Ifc 2.0</div>
<div class="hl" style="left:288px;top:588px;width:468px"></div>
<svg style="left:332px;top:474px" width="24" height="14"><g stroke="#A9A694" fill="none"><rect x="1" y="2" width="5" height="4" fill="#A9A694" stroke="none"/><path d="M7.500 2.500 V3.500 M7.500 5 V6 M9 4 H10" stroke-width="1"/><rect x="13.500" y="2.500" width="7" height="3" rx="1"/><rect x="13.500" y="8.500" width="7" height="3" rx="1"/><path d="M1.500 9 V11.500 H5.500 V9 M7 10.500 H9" stroke-width="1"/></g></svg>
<svg style="left:335px;top:498px" width="16" height="10"><path d="M0.500 10 V0.500 H15.500 V10" fill="#fff" stroke="#000"/></svg>
<svg style="left:335px;top:518px" width="16" height="10"><defs><pattern id="hp" width="4" height="4" patternUnits="userSpaceOnUse"><rect width="4" height="4" fill="#fff"/><path d="M-1 3 L3 -1 M1 5 L5 1" stroke="#5A5AB0" stroke-width="1.500"/></pattern></defs><rect x="0" y="0" width="16" height="10" fill="url(#hp)"/><path d="M0.750 10 V1 H15.250 V10" fill="none" stroke="#000" stroke-width="1.500"/></svg>
<svg style="left:332px;top:535px" width="22" height="13"><path d="M1.500 6.500 L9.500 1 L19.500 5 L13 10.500Z" fill="#fff" stroke="#333" stroke-width="0.800"/><path d="M1.500 6.500 V13 H13 V10.500Z" fill="#A6A6D6" stroke="#555" stroke-width="0.600"/><path d="M13 10.500 L19.500 5 V13 H13Z" fill="#3E3E5A"/></svg>
<svg style="left:335px;top:556px" width="20" height="12"><rect x="0.500" y="1.500" width="8" height="6" fill="#B9B9E0" stroke="#777"/><path d="M0.500 4.500 H8.500" stroke="#66668A"/><path d="M1 10 H9" stroke="#000" stroke-width="1.600" stroke-dasharray="2 1"/><path d="M10.500 3.500 H14.500 L17.500 6.500 V12 M10.500 3.500 V12 M14.500 3.500 V6.500 H17.500" fill="#fff" stroke="#000"/><path d="M12 8.500 H15" stroke="#000"/></svg>
<svg style="left:336px;top:578px" width="14" height="10"><path d="M0.500 10 L1.500 5 L5 1 L8 5 L6 10Z" fill="#4A5AA8" stroke="#2A2A5A" stroke-width="0.800"/><path d="M6 10 L7 5 L10 1 L13.500 5 L13 10Z" fill="#C03A2A" stroke="#6A1A10" stroke-width="0.800"/><path d="M3 6.500 L5 4.500 L7 6.500 L5 8.500Z M8 6.500 L10 4.500 L12 6.500 L10 8.500Z" fill="#F3F1E8"/></svg>
<svg style="left:298px;top:602px" width="28" height="17"><g fill="#fff" stroke="#000" stroke-width="1"><path d="M1 14.500 L7 9.500 H27 L21 14.500Z"/><path d="M1 12 L7 7 H27 L21 12Z"/><path d="M1 9.500 L7 4.500 H27 L21 9.500Z"/><path d="M1 7 L7 2 H27 L21 7Z"/></g><path d="M8 5.500 L10 3.500 H22 L20 5.500Z" fill="none" stroke="#000" stroke-width="0.800"/></svg>
<div class="btn" style="left:333px;top:601px;width:216px;height:19px"></div>
<svg style="left:340px;top:604px" width="18" height="12"><path d="M0.500 6 C4 0.500 13 0.500 17 6 C13 11.500 4 11.500 0.500 6Z" fill="#fff" stroke="#000" stroke-width="1.200"/><circle cx="8.800" cy="6" r="3.200" fill="#6B4A2A" stroke="#000"/><circle cx="8.800" cy="6" r="1.300" fill="#000"/></svg>
<div class="t " style="left:361px;top:604px;">Site lines</div>
<div class="tr" style="left:540px;top:606px"></div>
<div class="btn" style="left:589px;top:599px;width:71px;height:23px"></div>
<div class="t " style="left:589px;width:71px;text-align:center;top:604px;">Cancel</div>
<div class="a" style="left:674px;top:598px;width:71px;height:24px;border:1px solid #000"></div>
<div class="btn" style="left:675px;top:599px;width:69px;height:22px"></div>
<div class="t " style="left:675px;width:69px;text-align:center;top:604px;">OK</div>
<svg style="left:750px;top:619px" width="11" height="11"><path d="M10.500 2 L2 10.500 M10.500 5.500 L5.500 10.500 M10.500 9 L9 10.500" stroke="#B8B4A2" stroke-width="1.400"/><path d="M11 3 L3 11 M11 6.500 L6.500 11" stroke="#fff" stroke-width="0.800"/></svg>
</div></body></html>
